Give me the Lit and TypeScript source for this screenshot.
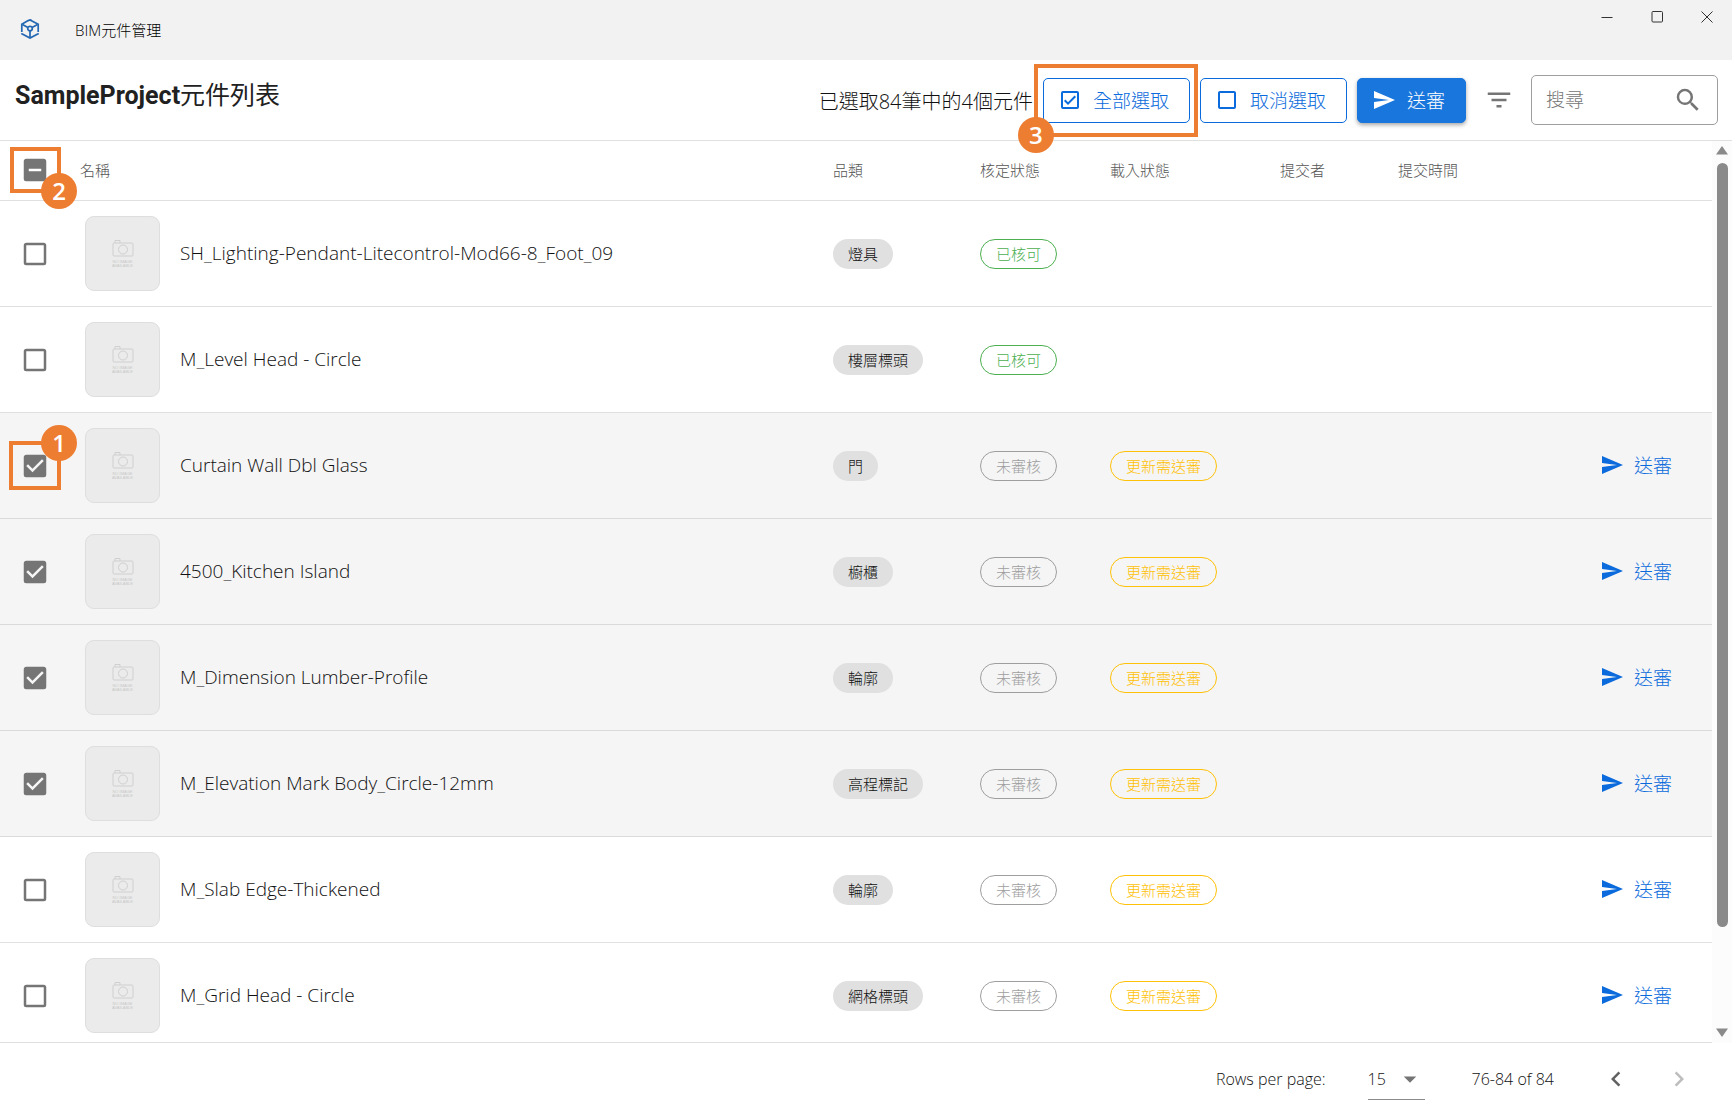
import { LitElement, html, css, svg, nothing } from "lit";
import { customElement, property, state } from "lit/decorators.js";

interface Item {
  name: string;
  category: string;
  approved: boolean;
  selected: boolean;
}

const ITEMS: Item[] = [
  { name: "SH_Lighting-Pendant-Litecontrol-Mod66-8_Foot_09", category: "燈具", approved: true, selected: false },
  { name: "M_Level Head - Circle", category: "樓層標頭", approved: true, selected: false },
  { name: "Curtain Wall Dbl Glass", category: "門", approved: false, selected: true },
  { name: "4500_Kitchen Island", category: "櫥櫃", approved: false, selected: true },
  { name: "M_Dimension Lumber-Profile", category: "輪廓", approved: false, selected: true },
  { name: "M_Elevation Mark Body_Circle-12mm", category: "高程標記", approved: false, selected: true },
  { name: "M_Slab Edge-Thickened", category: "輪廓", approved: false, selected: false },
  { name: "M_Grid Head - Circle", category: "網格標頭", approved: false, selected: false },
];

const PATHS: Record<string, string> = {
  send: "M2,21L23,12L2,3V10L17,12L2,14V21Z",
  filter: "M6,13H18V11H6M3,6V8H21V6M10,18H14V16H10V18Z",
  search:
    "M9.5,3A6.5,6.5 0 0,1 16,9.5C16,11.11 15.41,12.59 14.44,13.73L14.71,14H15.5L20.5,19L19,20.5L14,15.5V14.71L13.73,14.44C12.59,15.41 11.11,16 9.5,16A6.5,6.5 0 0,1 3,9.5A6.5,6.5 0 0,1 9.5,3M9.5,5C7,5 5,7 5,9.5C5,12 7,14 9.5,14C12,14 14,12 14,9.5C14,7 12,5 9.5,5Z",
  blank:
    "M19,3H5C3.89,3 3,3.89 3,5V19A2,2 0 0,0 5,21H19A2,2 0 0,0 21,19V5C21,3.89 20.1,3 19,3M19,5V19H5V5H19Z",
  markedOutline:
    "M19,19H5V5H19M19,3H5A2,2 0 0,0 3,5V19A2,2 0 0,0 5,21H19A2,2 0 0,0 21,19V5A2,2 0 0,0 19,3M16.59,7.58L10,14.17L7.41,11.59L6,13L10,17L18,9L16.59,7.58Z",
  marked:
    "M10,17L5,12L6.41,10.58L10,14.17L17.59,6.58L19,8M19,3H5C3.89,3 3,3.89 3,5V19A2,2 0 0,0 5,21H19A2,2 0 0,0 21,19V5C21,3.89 20.1,3 19,3Z",
  minus: "M17,13H7V11H17M19,3H5C3.89,3 3,3.89 3,5V19A2,2 0 0,0 5,21H19A2,2 0 0,0 21,19V5C21,3.89 20.1,3 19,3Z",
  menuDown: "M7,10L12,15L17,10H7Z",
  left: "M15.41,16.58L10.83,12L15.41,7.41L14,6L8,12L14,18L15.41,16.58Z",
  right: "M8.59,16.58L13.17,12L8.59,7.41L10,6L16,12L10,18L8.59,16.58Z",
};

@customElement("ui-icon")
class UiIcon extends LitElement {
  @property() name = "send";

  static styles = css`
    :host {
      display: block;
      flex: none;
      width: 24px;
      height: 24px;
    }
    svg {
      display: block;
      width: 100%;
      height: 100%;
      fill: currentColor;
    }
  `;

  render() {
    return html`<svg viewBox="0 0 24 24" aria-hidden="true">${svg`<path d=${PATHS[this.name]} />`}</svg>`;
  }
}

@customElement("step-callout")
class StepCallout extends LitElement {
  @property() step = "1";

  static styles = css`
    :host {
      position: absolute;
      box-sizing: border-box;
      border: 4px solid #ed7d31;
      pointer-events: none;
      z-index: 2;
    }
    .badge {
      position: absolute;
      display: grid;
      place-items: center;
      width: 36px;
      height: 36px;
      border-radius: 50%;
      background: #ed7d31;
      color: #fff;
      font: 600 24px/36px "Open Sans", sans-serif;
    }
    :host([corner="top-right"]) .badge {
      top: -20px;
      right: -20px;
    }
    :host([corner="bottom-right"]) .badge {
      bottom: -20px;
      right: -20px;
    }
    :host([corner="bottom-left"]) .badge {
      bottom: -20px;
      left: -20px;
    }
  `;

  render() {
    return html`<span class="badge">${this.step}</span>`;
  }
}

@customElement("app-root")
class AppRoot extends LitElement {
  @state() private items = ITEMS;

  static styles = css`
    :host {
      display: flex;
      flex-direction: column;
      height: 100vh;
      overflow: hidden;
      background: #fff;
      color: #111;
      font-family: "Open Sans", "Noto Sans CJK TC", sans-serif;
      font-weight: 300;
    }
    *,
    *::before {
      box-sizing: border-box;
    }
    button,
    input,
    select {
      font: inherit;
      color: inherit;
      margin: 0;
    }
    button {
      display: flex;
      align-items: center;
      border: 0;
      padding: 0;
      background: none;
      cursor: pointer;
    }

    .titlebar {
      display: flex;
      align-items: center;
      flex: none;
      height: 60px;
      padding: 0 0 2px 20px;
      background: #f2f2f2;
      color: #000;
      font-size: 15px;
    }
    .logo {
      width: 20px;
      height: 20px;
      margin-right: 35px;
    }
    .window-controls {
      display: flex;
      align-self: flex-start;
      margin-left: auto;
    }
    .window-controls button {
      justify-content: center;
      width: 50px;
      height: 33px;
    }
    .window-controls svg {
      width: 12px;
      height: 12px;
      fill: none;
      stroke: #333;
    }

    .toolbar {
      display: flex;
      align-items: center;
      flex: none;
      height: 81px;
      padding: 0 14px 0 15px;
      border-bottom: 1px solid #e0e0e0;
    }
    h1 {
      margin: 0 auto 8px 0;
      color: #212121;
      font: 400 25px/36px Roboto, "Noto Sans CJK TC", sans-serif;
    }
    h1 b {
      font-weight: 700;
    }
    .count {
      font-size: 20px;
    }
    .anchor {
      position: relative;
      margin: 0 10px;
    }
    .action {
      gap: 11px;
      height: 45px;
      padding: 0 20px 0 14px;
      border: 1px solid #0b6bdc;
      border-radius: 5px;
      color: #0b6bdc;
      font-size: 19px;
    }
    .solid {
      margin-left: 10px;
      background: #1976dc;
      border-color: #1976dc;
      color: #fff;
      box-shadow: 0 2px 4px rgba(0, 0, 0, 0.35);
    }
    .filter {
      margin: 0 17px 0 18px;
      color: #757575;
    }
    .large {
      width: 30px;
      height: 30px;
    }
    .search {
      display: flex;
      align-items: center;
      width: 187px;
      height: 50px;
      padding: 0 14px;
      border: 1px solid #9e9e9e;
      border-radius: 5px;
      color: #757575;
      font-size: 19px;
    }
    .search input {
      flex: 1;
      min-width: 0;
      padding: 0;
      border: 0;
      outline: 0;
      background: none;
    }
    .search input::placeholder {
      color: #757575;
      opacity: 1;
    }
    .callout-all {
      inset: -14px -8px -14px -9px;
    }

    .body {
      display: flex;
      flex: 1;
      min-height: 0;
    }
    .viewport {
      flex: 1;
      min-width: 0;
      overflow: hidden;
      border-bottom: 1px solid #e0e0e0;
    }
    table {
      width: 100%;
      table-layout: fixed;
      border-collapse: separate;
      border-spacing: 0;
    }
    .c-check {
      width: 80px;
    }
    .c-category {
      width: 147px;
    }
    .c-review {
      width: 130px;
    }
    .c-load {
      width: 170px;
    }
    .c-person {
      width: 118px;
    }
    .c-time {
      width: 202px;
    }
    .c-action {
      width: 112px;
    }
    th,
    td {
      padding: 0;
      border-bottom: 1px solid #e0e0e0;
      text-align: left;
      vertical-align: middle;
    }
    th {
      height: 60px;
      padding-bottom: 2px;
      color: #555;
      font-size: 15px;
      font-weight: 300;
    }
    td {
      height: 106px;
    }
    .selected td {
      background: #f5f5f5;
      border-color: #dadada;
    }
    .check {
      position: relative;
      display: grid;
      width: 30px;
      height: 30px;
      margin-left: 20px;
      color: #757575;
    }
    .check > * {
      grid-area: 1 / 1;
    }
    .check input {
      appearance: none;
      width: 30px;
      height: 30px;
      cursor: pointer;
    }
    .check ui-icon {
      pointer-events: none;
    }
    .callout-head {
      inset: -8px -11px -8px -10px;
    }
    .callout-row {
      inset: -10px -11px -9px -11px;
    }
    .item {
      display: flex;
      align-items: center;
      gap: 20px;
      padding-left: 5px;
      font-size: 19px;
    }
    .name {
      padding-bottom: 2px;
    }
    .thumb {
      flex: none;
      display: flex;
      flex-direction: column;
      align-items: center;
      justify-content: center;
      width: 75px;
      height: 75px;
      border: 1px solid #dedede;
      border-radius: 9px;
      background: #ebebeb;
      color: #c8c8c8;
      font: 400 4px/4px "Liberation Sans", sans-serif;
      text-align: center;
    }
    .thumb svg {
      width: 22px;
      height: 18px;
      margin-bottom: 3px;
      fill: none;
      stroke: #cfcfcf;
    }
    .chip {
      display: inline-flex;
      align-items: center;
      height: 30px;
      padding: 0 15px 1px;
      border-radius: 15px;
      background: #e0e0e0;
      font-size: 15px;
      vertical-align: middle;
    }
    .outlined {
      border: 1px solid;
      background: none;
    }
    .green {
      color: #4caf50;
    }
    .grey {
      color: #9e9e9e;
    }
    .amber {
      color: #ffc107;
    }
    .row-action {
      gap: 10px;
      padding-bottom: 2px;
      color: #0b6bdc;
      font-size: 19px;
    }

    .scrollbar {
      display: flex;
      flex-direction: column;
      align-items: center;
      flex: none;
      width: 20px;
      padding: 5px 0 6px 0;
      background: #fcfcfc;
    }
    .arrow {
      width: 12px;
      height: 9px;
      fill: #8a8a8a;
    }
    .track {
      flex: 1;
      width: 11px;
      margin: 8px 0 7px;
    }
    .thumb-bar {
      height: 89%;
      border-radius: 6px;
      background: #8a8a8a;
    }

    .footer {
      display: flex;
      align-items: center;
      justify-content: flex-end;
      flex: none;
      height: 72px;
      padding-right: 38px;
      font-size: 16px;
    }
    .page-size {
      position: relative;
      display: grid;
      align-items: center;
      width: 57px;
      height: 42px;
      margin: 0 47px 0 42px;
      border-bottom: 1px solid #8a8a8a;
    }
    .page-size > * {
      grid-area: 1 / 1;
    }
    .page-size select {
      appearance: none;
      height: 40px;
      padding: 0;
      border: 0;
      background: none;
    }
    .page-size ui-icon {
      width: 30px;
      height: 30px;
      justify-self: end;
      color: #757575;
      pointer-events: none;
    }
    .pager {
      display: flex;
      gap: 33px;
      margin-left: 47px;
      color: #616161;
    }
    .pager button:disabled {
      color: #bdbdbd;
    }
  `;

  private toggle(index: number) {
    this.items = this.items.map((it, i) => (i === index ? { ...it, selected: !it.selected } : it));
  }

  private setAll(selected: boolean) {
    this.items = this.items.map((it) => ({ ...it, selected }));
  }

  private renderRow(item: Item, index: number) {
    return html`
      <tr class=${item.selected ? "selected" : ""}>
        <td>
          <label class="check">
            <input
              type="checkbox"
              aria-label=${item.name}
              .checked=${item.selected}
              @change=${() => this.toggle(index)}
            />
            <ui-icon class="large" name=${item.selected ? "marked" : "blank"}></ui-icon>
            ${index === 2
              ? html`<step-callout class="callout-row" corner="top-right" step="1"></step-callout>`
              : nothing}
          </label>
        </td>
        <td>
          <div class="item">
            <div class="thumb">
              <svg viewBox="0 0 22 18" aria-hidden="true">
                <rect x="1" y="4" width="20" height="13" rx="1" />
                <path d="M3 4V1.500H8V4" />
                <circle cx="11" cy="10.500" r="4.500" />
              </svg>
              <span>NO IMAGE</span><span>AVAILABLE</span>
            </div>
            <span class="name">${item.name}</span>
          </div>
        </td>
        <td><span class="chip">${item.category}</span></td>
        <td>
          <span class="chip outlined ${item.approved ? "green" : "grey"}">${item.approved ? "已核可" : "未審核"}</span>
        </td>
        <td>${item.approved ? nothing : html`<span class="chip outlined amber">更新需送審</span>`}</td>
        <td></td>
        <td></td>
        <td>
          ${item.approved
            ? nothing
            : html`<button class="row-action"><ui-icon name="send"></ui-icon>送審</button>`}
        </td>
      </tr>
    `;
  }

  render() {
    return html`
      <header class="titlebar">
        <svg class="logo" viewBox="0 0 20 20" fill="none" stroke="#2467b3" stroke-width="1.700" aria-hidden="true">
          <path d="M8.200 1.600L10 .9L18.200 5.200V13M11.800 1.600L10 .9M8.200 1.600L1.800 5.200V13M1.800 14.200V14.800L10 19.100L18.200 14.800V14.200" />
          <path d="M2.500 5.600L7.900 8.500M17.500 5.600L12.100 8.500M10 12V18.800" />
          <circle cx="10" cy="9.600" r="2.300" />
        </svg>
        <span>BIM元件管理</span>
        <div class="window-controls">
          <button aria-label="Minimize"><svg viewBox="0 0 12 12"><path d="M.5 6.500H11.500" /></svg></button>
          <button aria-label="Maximize"><svg viewBox="0 0 12 12"><rect x="1" y=".5" width="10.500" height="10.500" rx="1" /></svg></button>
          <button aria-label="Close"><svg viewBox="0 0 12 12"><path d="M.5 .5L11.500 11.500M11.500 .5L.5 11.500" /></svg></button>
        </div>
      </header>

      <section class="toolbar">
        <h1><b>SampleProject</b>元件列表</h1>
        <span class="count">已選取84筆中的4個元件</span>
        <div class="anchor">
          <button class="action" @click=${() => this.setAll(true)}>
            <ui-icon name="markedOutline"></ui-icon>全部選取
          </button>
          <step-callout class="callout-all" corner="bottom-left" step="3"></step-callout>
        </div>
        <button class="action" @click=${() => this.setAll(false)}><ui-icon name="blank"></ui-icon>取消選取</button>
        <button class="action solid"><ui-icon name="send"></ui-icon>送審</button>
        <button class="filter" aria-label="Filter"><ui-icon class="large" name="filter"></ui-icon></button>
        <label class="search">
          <input type="text" placeholder="搜尋" aria-label="搜尋" />
          <ui-icon class="large" name="search"></ui-icon>
        </label>
      </section>

      <main class="body">
        <div class="viewport">
          <table>
            <colgroup>
              <col class="c-check" />
              <col />
              <col class="c-category" />
              <col class="c-review" />
              <col class="c-load" />
              <col class="c-person" />
              <col class="c-time" />
              <col class="c-action" />
            </colgroup>
            <thead>
              <tr>
                <th>
                  <label class="check">
                    <input type="checkbox" aria-label="全部選取" .indeterminate=${true} />
                    <ui-icon class="large" name="minus"></ui-icon>
                    <step-callout class="callout-head" corner="bottom-right" step="2"></step-callout>
                  </label>
                </th>
                <th>名稱</th>
                <th>品類</th>
                <th>核定狀態</th>
                <th>載入狀態</th>
                <th>提交者</th>
                <th>提交時間</th>
                <th></th>
              </tr>
            </thead>
            <tbody>
              ${this.items.map((item, i) => this.renderRow(item, i))}
            </tbody>
          </table>
        </div>
        <div class="scrollbar" aria-hidden="true">
          <svg class="arrow" viewBox="0 0 12 9"><path d="M6 0L12 8.500H0Z" /></svg>
          <div class="track"><div class="thumb-bar"></div></div>
          <svg class="arrow" viewBox="0 0 12 9"><path d="M0 .5H12L6 9Z" /></svg>
        </div>
      </main>

      <footer class="footer">
        <label for="page-size">Rows per page:</label>
        <div class="page-size">
          <select id="page-size">
            <option>15</option>
          </select>
          <ui-icon name="menuDown"></ui-icon>
        </div>
        <span>76-84 of 84</span>
        <nav class="pager">
          <button aria-label="Previous page"><ui-icon class="large" name="left"></ui-icon></button>
          <button aria-label="Next page" disabled><ui-icon class="large" name="right"></ui-icon></button>
        </nav>
      </footer>
    `;
  }
}
